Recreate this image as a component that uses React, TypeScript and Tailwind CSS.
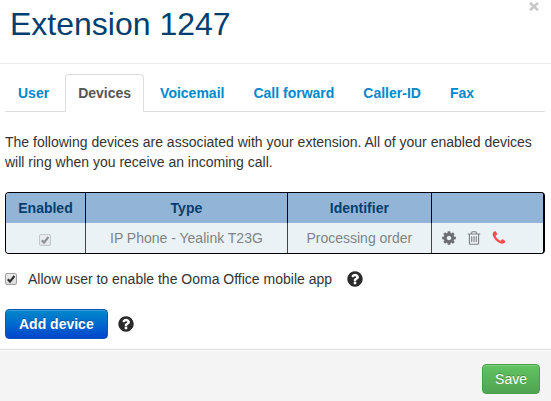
import { useState } from "react";
import type { InputHTMLAttributes } from "react";

const COG =
  "M1152 896q0-106-75-181t-181-75-181 75-75 181 75 181 181 75 181-75 75-181zm512-109v222q0 12-8 23t-20 13l-185 28q-19 54-39 91 35 50 107 138 10 12 10 25t-9 23q-27 37-99 108t-94 71q-12 0-26-9l-138-108q-44 23-91 38-16 136-29 186-7 28-36 28h-222q-14 0-24.5-8.5t-11.5-21.5l-28-184q-49-16-90-37l-141 107q-10 9-25 9-14 0-25-11-126-114-165-168-7-10-7-23 0-12 8-23 15-21 51-66.5t54-70.5q-27-50-41-99l-183-27q-13-2-21-12.5t-8-23.5v-222q0-12 8-23t19-13l186-28q14-46 39-92-40-57-107-138-10-12-10-24 0-10 9-23 26-36 98.5-107.5t94.5-71.5q13 0 26 10l138 107q44-23 91-38 16-136 29-186 7-28 36-28h222q14 0 24.5 8.5t11.5 21.5l28 184q49 16 90 37l142-107q9-9 24-9 13 0 25 10 129 119 165 170 7 8 7 22 0 12-8 23-15 21-51 66.5t-54 70.5q26 50 41 98l183 28q13 2 21 12.5t8 23.5z";
const TRASH =
  "M704 736v576q0 14-9 23t-23 9h-64q-14 0-23-9t-9-23v-576q0-14 9-23t23-9h64q14 0 23 9t9 23zm256 0v576q0 14-9 23t-23 9h-64q-14 0-23-9t-9-23v-576q0-14 9-23t23-9h64q14 0 23 9t9 23zm256 0v576q0 14-9 23t-23 9h-64q-14 0-23-9t-9-23v-576q0-14 9-23t23-9h64q14 0 23 9t9 23zm128 724v-948h-896v948q0 22 7 40.5t14.5 27 10.5 8.5h832q3 0 10.5-8.5t14.5-27 7-40.5zm-672-1076h448l-48-117q-7-9-17-11h-317q-10 2-17 11zm928 32v64q0 14-9 23t-23 9h-96v948q0 83-47 143.5t-113 60.5h-832q-66 0-113-58.5t-47-141.5v-952h-96q-14 0-23-9t-9-23v-64q0-14 9-23t23-9h309l70-167q15-37 54-63t79-26h320q40 0 79 26t54 63l70 167h309q14 0 23 9t9 23z";
const PHONE =
  "M1600 1240q0 27-10 70.5t-21 68.5q-21 50-122 106-94 51-186 51-27 0-52.5-3.5t-57.5-12.5-47.5-14.5-55.5-20.5-49-18q-98-35-175-83-128-79-264.5-215.5t-215.5-264.5q-48-77-83-175-3-9-18-49t-20.5-55.5-14.5-47.5-12.5-57.5-3.5-52.5q0-92 51-186 56-101 106-122 25-11 68.5-21t70.5-10q14 0 21 3 18 6 53 76 11 19 30 54t35 63.5 31 53.5q3 4 17.5 25t21.5 35.5 7 28.5q0 20-28.5 50t-62 55-62 53-28.5 46q0 9 5 22.5t8.5 20.5 14 24 11.5 19q76 137 174 235t235 174q2 1 19 11.5t24 14 20.5 8.5 22.5 5q18 0 46-28.5t53-62 55-62 50-28.5q14 0 28.5 7t35.5 21.5 25 17.5q25 15 53.5 31t63.5 35 54 30q70 35 76 53 3 7 3 21z";
const QUESTION =
  "M1024 1376v-192q0-14-9-23t-23-9h-192q-14 0-23 9t-9 23v192q0 14 9 23t23 9h192q14 0 23-9t9-23zm256-672q0-88-55.5-163t-138.5-116-170-41q-243 0-371 213-15 24 8 42l132 100q7 6 19 6 16 0 25-12 53-68 86-92 34-24 86-24 48 0 85.5 26t37.5 59q0 38-20 61t-68 45q-63 28-115.5 86.5t-52.5 125.5v36q0 14 9 23t23 9h192q14 0 23-9t9-23q0-19 21.5-49.5t54.5-49.5q32-18 49-28.5t46-35 44.5-48 28-60.5 12.5-81zm384 192q0 209-103 385.5t-279.5 279.5-385.5 103-385.5-103-279.5-279.5-103-385.5 103-385.5 279.5-279.5 385.5-103 385.5 103 279.5 279.5 103 385.5z";

function Glyph({ d, className }: { d: string; className: string }) {
  return (
    <svg viewBox="0 0 1792 1792" fill="currentColor" aria-hidden="true" className={className}>
      <path d={d} />
    </svg>
  );
}

function Checkbox(props: InputHTMLAttributes<HTMLInputElement>) {
  return (
    <span className="inline-grid size-3 shrink-0 place-items-center has-disabled:opacity-50">
      <input
        type="checkbox"
        {...props}
        className="peer col-start-1 row-start-1 size-3 appearance-none rounded-xs border border-[#a0a0a0] bg-linear-to-b from-[#ededed] to-[#dcdcdc]"
      />
      <svg
        viewBox="0 0 12 12"
        aria-hidden="true"
        className="pointer-events-none invisible col-start-1 row-start-1 size-3 peer-checked:visible"
      >
        <path d="M2.8 6.3 5 8.6 9.4 3" fill="none" stroke="#333" strokeWidth="2.2" />
      </svg>
    </span>
  );
}

function Help({ label }: { label: string }) {
  return (
    <button type="button" aria-label={label} className="text-[#2b2b2b]">
      <Glyph d={QUESTION} className="size-[18px]" />
    </button>
  );
}

const tabs = ["User", "Devices", "Voicemail", "Call forward", "Caller-ID", "Fax"];

export default function App() {
  const [active, setActive] = useState("Devices");
  const [mobile, setMobile] = useState(true);

  return (
    <div className="min-h-screen bg-white font-['Liberation_Sans',Arial,sans-serif] text-sm text-[#333]">
      <header className="flex items-start justify-between border-b border-[#eee] px-3 pb-[19px] pl-[10px]">
        <h1 className="pt-1 text-[32px] leading-10 text-[#003f6f]">Extension 1247</h1>
        <button type="button" aria-label="Close" className="pt-[2px] text-[#c8c8c8]">
          <svg viewBox="0 0 10 9" aria-hidden="true" className="h-[9px] w-[10px]">
            <path d="M1 .8 9 8.2M9 .8 1 8.2" stroke="currentColor" strokeWidth="2.6" />
          </svg>
        </button>
      </header>

      <main className="px-[5px] pt-[10px] pb-[10px] pr-[6px]">
        <nav className="flex gap-[3px] border-b border-[#ddd] font-bold">
          {tabs.map((tab) => (
            <a
              key={tab}
              href="#"
              onClick={(e) => {
                e.preventDefault();
                setActive(tab);
              }}
              aria-current={tab === active ? "page" : undefined}
              className={
                tab === active
                  ? "-mb-px rounded-t border border-[#ddd] border-b-white bg-white px-3 py-2 leading-5 text-[#555]"
                  : "-mb-px border border-transparent px-3 py-2 leading-5 text-[#0088cc]"
              }
            >
              {tab}
            </a>
          ))}
        </nav>

        <p className="mt-5 leading-5">
          The following devices are associated with your extension. All of your enabled devices will
          ring when you receive an incoming call.
        </p>

        <div className="mt-5 overflow-hidden rounded border border-r-2 border-black">
          <table className="w-full table-fixed border-collapse text-center leading-5">
            <colgroup>
              <col className="w-[14.8%]" />
              <col className="w-[37.6%]" />
              <col className="w-[26.8%]" />
              <col />
            </colgroup>
            <thead className="bg-[#92b5d7] text-[#003f6f]">
              <tr className="h-[30px]">
                <th scope="col" className="border-r border-black">Enabled</th>
                <th scope="col" className="border-r border-black">Type</th>
                <th scope="col" className="border-r border-black">Identifier</th>
                <td />
              </tr>
            </thead>
            <tbody className="bg-[#eaf2f6] text-[#808385]">
              <tr className="h-[30px]">
                <td className="border-r border-[#444]">
                  <div className="flex justify-center pt-1">
                    <Checkbox aria-label="IP Phone enabled" checked disabled readOnly />
                  </div>
                </td>
                <td className="border-r border-[#444]">IP Phone - Yealink T23G</td>
                <td className="border-r border-[#444]">Processing order</td>
                <td>
                  <div className="flex gap-[9px] pl-[9px]">
                    <button type="button" aria-label="Device settings" className="text-[#6b6e70]">
                      <Glyph d={COG} className="size-4" />
                    </button>
                    <button type="button" aria-label="Delete device">
                      <Glyph d={TRASH} className="size-4" />
                    </button>
                    <button type="button" aria-label="Call device" className="text-[#ff4c4c]">
                      <Glyph d={PHONE} className="size-4" />
                    </button>
                  </div>
                </td>
              </tr>
            </tbody>
          </table>
        </div>

        <div className="mt-[15px] flex items-center gap-[14px]">
          <label className="flex items-center gap-[11px] leading-5">
            <Checkbox checked={mobile} onChange={(e) => setMobile(e.target.checked)} />
            Allow user to enable the Ooma Office mobile app
          </label>
          <Help label="About the mobile app" />
        </div>

        <div className="mt-5 flex items-center gap-[9px]">
          <button
            type="button"
            className="rounded border border-[#0a55b5] bg-linear-to-b from-[#0088cc] to-[#0044cc] px-[13px] py-1 leading-5 font-bold text-white shadow-[inset_0_1px_0_rgba(255,255,255,0.2)] text-shadow-[0_-1px_0_rgba(0,0,0,0.25)]"
          >
            Add device
          </button>
          <Help label="About adding devices" />
        </div>
      </main>

      <footer className="flex justify-end border-t border-[#ddd] bg-[#f4f4f4] px-[11px] pt-[14px] pb-[7px] shadow-[inset_0_1px_0_#fff]">
        <button
          type="button"
          className="rounded border border-[#4a9f4a] bg-linear-to-b from-[#62c462] to-[#51a351] px-3 py-1 leading-5 text-white shadow-[inset_0_1px_0_rgba(255,255,255,0.2)] text-shadow-[0_-1px_0_rgba(0,0,0,0.25)]"
        >
          Save
        </button>
      </footer>
    </div>
  );
}
